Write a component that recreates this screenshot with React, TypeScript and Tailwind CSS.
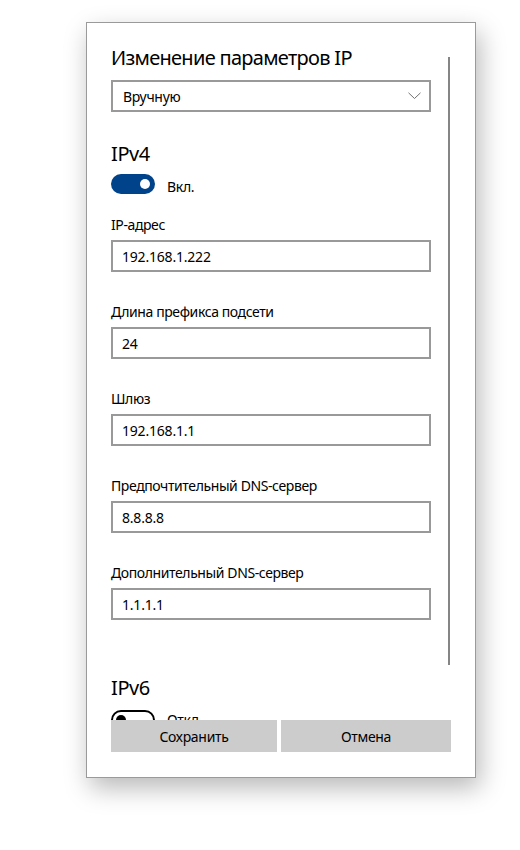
import React from "react";

const font = { fontFamily: '"Noto Sans", "Open Sans", sans-serif' };

function Field({ label, value }: { label: string; value: string }) {
  return (
    <div className="mt-[30px] first:mt-0">
      <div className="text-[14px] leading-[20px] tracking-[-0.4px] text-black">{label}</div>
      <div className="mt-[5px] flex h-[32px] w-[320px] items-center border-2 border-[#999999] px-[9px] text-[14px] tracking-[-0.2px] text-black">
        {value}
      </div>
    </div>
  );
}

function Toggle({ on, label }: { on: boolean; label: string }) {
  return (
    <div className="flex h-[20px] items-center">
      {on ? (
        <div className="flex h-[20px] w-[44px] items-center justify-end rounded-full bg-[#00438b] pr-[5px]">
          <div className="h-[10px] w-[10px] rounded-full bg-white" />
        </div>
      ) : (
        <div className="flex h-[20px] w-[44px] items-center rounded-full border-2 border-black pl-[3px]">
          <div className="h-[10px] w-[10px] rounded-full bg-black" />
        </div>
      )}
      <span
        className={`ml-[12px] h-[20px] text-[14px] tracking-[-0.3px] text-black ${on ? "leading-[26px]" : "leading-[20px]"}`}
      >
        {label}
      </span>
    </div>
  );
}

export default function App() {
  const fields = [
    { label: "IP-адрес", value: "192.168.1.222" },
    { label: "Длина префикса подсети", value: "24" },
    { label: "Шлюз", value: "192.168.1.1" },
    { label: "Предпочтительный DNS-сервер", value: "8.8.8.8" },
    { label: "Дополнительный DNS-сервер", value: "1.1.1.1" },
  ];

  return (
    <div className="min-h-[850px] w-[520px] bg-white pl-[86px] pt-[22px]" style={font}>
      <div className="relative flex h-[756px] w-[390px] flex-col border border-[#9a9a9a] bg-white shadow-[4px_10px_24px_rgba(0,0,0,0.28)]">
        {/* scrollable body, clipped at the buttons */}
        <div className="h-[697px] overflow-hidden pl-[24px] pt-[21px]">
          <div className="text-[20px] leading-[28px] tracking-[-0.7px] text-black">Изменение параметров IP</div>

          <div className="mt-[8px] flex h-[32px] w-[320px] items-center justify-between border-2 border-[#999999] pl-[10px] pr-[8px] text-[14px] tracking-[-0.3px] text-black">
            <span>Вручную</span>
            <svg width="13" height="8" viewBox="0 0 13 8" fill="none" aria-hidden>
              <polyline points="0.5,0.8 6.5,6.5 12.5,0.8" stroke="#707070" strokeWidth="1" />
            </svg>
          </div>

          <div className="mt-[28px] text-[20px] leading-[28px] tracking-[-0.4px] text-black">IPv4</div>
          <div className="mt-[6px]">
            <Toggle on label="Вкл." />
          </div>

          <div className="mt-[21px]">
            {fields.map((f) => (
              <Field key={f.label} label={f.label} value={f.value} />
            ))}
          </div>

          <div className="mt-[54px] text-[20px] leading-[28px] tracking-[-0.4px] text-black">IPv6</div>
          <div className="mt-[8px]">
            <Toggle on={false} label="Откл." />
          </div>
        </div>

        <div className="flex gap-[4px] pl-[24px]">
          <button className="h-[32px] w-[166px] bg-[#cccccc] text-[14px] tracking-[-0.3px] text-black">Сохранить</button>
          <button className="h-[32px] w-[170px] bg-[#cccccc] text-[14px] tracking-[-0.3px] text-black">Отмена</button>
        </div>

        {/* scrollbar thumb */}
        <div className="absolute left-[361px] top-[34px] h-[608px] w-[2px] bg-[#858585]" />
      </div>
    </div>
  );
}
